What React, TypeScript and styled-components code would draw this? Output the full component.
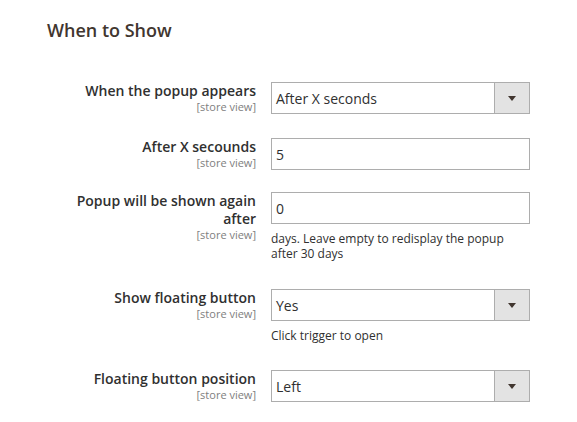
import styled, { createGlobalStyle } from 'styled-components';

const GlobalStyle = createGlobalStyle`
  html, body {
    margin: 0;
    padding: 0;
    background: #ffffff;
  }
  body {
    font-family: 'Open Sans', 'Liberation Sans', sans-serif;
    color: #303030;
  }
`;

const Fieldset = styled.div`
  padding: 18px 0 0 47px;
`;

const Legend = styled.h2`
  margin: 0 0 40px;
  font-size: 18px;
  line-height: 24px;
  font-weight: 600;
  color: #41362f;
`;

const Row = styled.div<{ $gap?: number }>`
  display: grid;
  grid-template-columns: 209px 259px;
  column-gap: 15px;
  align-items: start;
  margin-bottom: ${({ $gap }) => $gap ?? 22}px;
`;

const Label = styled.div`
  padding-left: 20px;
  text-align: right;
`;

const LabelText = styled.div`
  font-size: 14px;
  line-height: 18px;
  font-weight: 600;
  color: #303030;
`;

const Scope = styled.div`
  font-size: 11px;
  line-height: 14px;
  color: #808080;
`;

const Control = styled.div`
  display: flex;
  flex-direction: column;
`;

const Box = styled.div`
  display: flex;
  align-items: stretch;
  height: 32px;
  box-sizing: border-box;
  border: 1px solid #adadad;
  background: #ffffff;
`;

const Value = styled.span`
  flex: 1;
  display: flex;
  align-items: center;
  padding-left: 4px;
  font-size: 14px;
  color: #303030;
`;

const Trigger = styled.span`
  width: 34px;
  display: flex;
  align-items: center;
  justify-content: center;
  background: #e3e3e3;
  border-left: 1px solid #adadad;
`;

const Note = styled.div`
  margin-top: 7px;
  font-size: 12px;
  line-height: 15px;
  color: #303030;
`;

const Arrow = () => (
  <svg width="8" height="5" viewBox="0 0 8 5">
    <path d="M0 0h8L4 5z" fill="#41362f" />
  </svg>
);

type Field = {
  label: string;
  value: string;
  select?: boolean;
  note?: string;
  gap?: number;
};

const fields: Field[] = [
  { label: 'When the popup appears', value: 'After X seconds', select: true, gap: 24 },
  { label: 'After X secounds', value: '5', gap: 22 },
  {
    label: 'Popup will be shown again after',
    value: '0',
    note: 'days. Leave empty to redisplay the popup after 30 days',
    gap: 28,
  },
  { label: 'Show floating button', value: 'Yes', select: true, note: 'Click trigger to open', gap: 27 },
  { label: 'Floating button position', value: 'Left', select: true },
];

export default function App() {
  return (
    <>
      <GlobalStyle />
      <Fieldset>
        <Legend>When to Show</Legend>
        {fields.map((f) => (
          <Row key={f.label} $gap={f.gap}>
            <Label>
              <LabelText>{f.label}</LabelText>
              <Scope>[store view]</Scope>
            </Label>
            <Control>
              <Box>
                <Value>{f.value}</Value>
                {f.select && (
                  <Trigger>
                    <Arrow />
                  </Trigger>
                )}
              </Box>
              {f.note && <Note>{f.note}</Note>}
            </Control>
          </Row>
        ))}
      </Fieldset>
    </>
  );
}
